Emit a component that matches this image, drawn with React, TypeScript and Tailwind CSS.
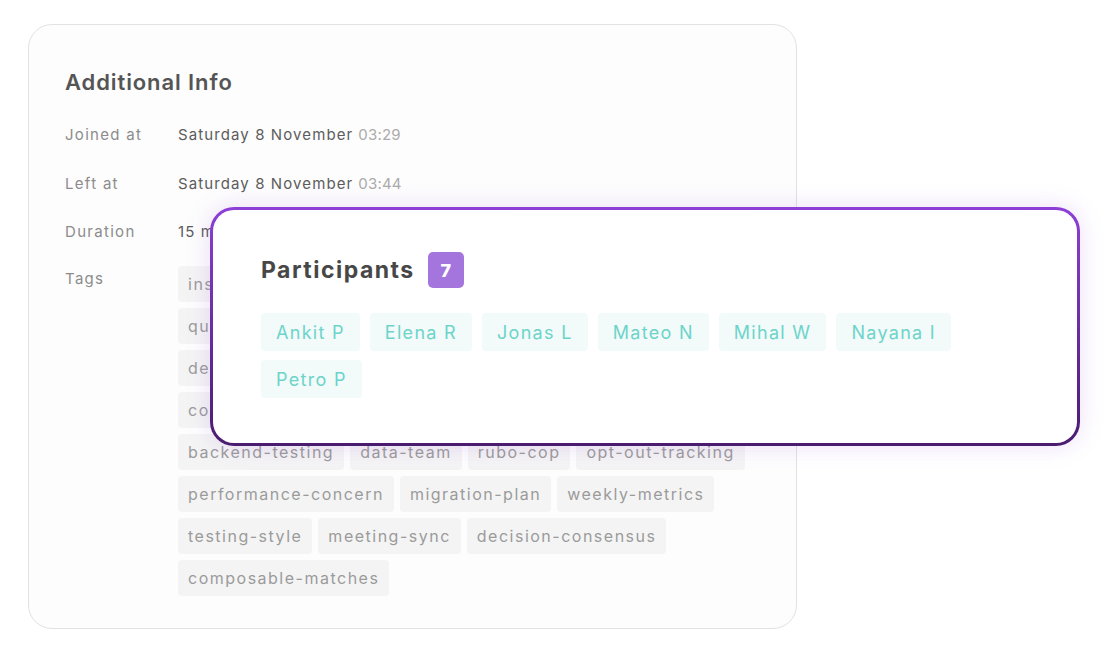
import React from "react"

const tagRows = [
  ["insights", "product-roadmap", "sprint-review"],
  ["quick-wins", "customer-feedback", "api-design"],
  ["design-review", "release-notes", "onboarding"],
  ["code-quality", "bug-triage", "retrospective"],
  ["backend-testing", "data-team", "rubo-cop", "opt-out-tracking"],
  ["performance-concern", "migration-plan", "weekly-metrics"],
  ["testing-style", "meeting-sync", "decision-consensus"],
  ["composable-matches"],
]

const participants = ["Ankit P", "Elena R", "Jonas L", "Mateo N", "Mihal W", "Nayana I", "Petro P"]

function InfoRow({ label, value, time }: { label: string; value: string; time?: string }) {
  return (
    <div className="flex items-center h-[48.5px]">
      <div className="w-[113px] shrink-0 text-[15px] text-[#8c8c8c] tracking-[1.3px]">{label}</div>
      <div className="text-[15px] text-[#5c5c5c] tracking-[1.1px]">
        {value}
        {time && <span className="ml-[5px] text-[#ababab] tracking-[0.2px]">{time}</span>}
      </div>
    </div>
  )
}

export default function App() {
  return (
    <div
      className="relative w-[1108px] h-[653px] bg-white"
      style={{ fontFamily: "Inter, 'Noto Sans', sans-serif" }}
    >
      <div className="absolute left-[28px] top-[24px] w-[769px] h-[605px] rounded-[24px] border border-[#e2e2e2] bg-[#fdfdfd] px-[36px] pt-[43px]">
        <h2 className="text-[22px] font-semibold text-[#555] tracking-[0.9px] leading-[28px]">Additional Info</h2>
        <div className="mt-[15px]">
          <InfoRow label="Joined at" value="Saturday 8 November" time="03:29" />
          <InfoRow label="Left at" value="Saturday 8 November" time="03:44" />
          <InfoRow label="Duration" value="15 minutes" />
          <div className="flex mt-[9px]">
            <div className="w-[113px] shrink-0 text-[15px] text-[#8c8c8c] tracking-[1.3px] pt-[2px]">Tags</div>
            <div className="flex flex-col gap-[6px]">
              {tagRows.map((row, i) => (
                <div key={i} className="flex gap-[6px]">
                  {row.map((t) => (
                    <span
                      key={t}
                      className="h-[36px] flex items-center px-[10px] rounded-[4px] bg-[#f4f4f4] text-[16px] text-[#9b9b9b] tracking-[1.5px]"
                    >
                      {t}
                    </span>
                  ))}
                </div>
              ))}
            </div>
          </div>
        </div>
      </div>

      {/* participants overlay card */}
      <div className="absolute left-[210px] top-[207px] w-[870px] h-[239px] rounded-[24px] p-[3px] bg-gradient-to-b from-[#8d3fd6] to-[#4a1c70] shadow-[0_0_24px_rgba(150,80,220,0.18)]">
        <div className="h-full w-full rounded-[21px] bg-white pl-[48px] pt-[42px]">
          <div className="flex items-center gap-[13px]">
            <h3 className="text-[23px] font-bold text-[#474747] tracking-[1.5px]">Participants</h3>
            <span className="w-[36px] h-[36px] rounded-[5px] bg-[#a475dc] text-white font-extrabold text-[18px] flex items-center justify-center">
              7
            </span>
          </div>
          <div className="mt-[25px] flex flex-wrap gap-x-[10px] gap-y-[9px] w-[720px]">
            {participants.map((p) => (
              <span
                key={p}
                className="h-[38px] flex items-center px-[15px] rounded-[4px] bg-[#f2fafa] text-[18px] text-[#6dd4c9] tracking-[1.3px]"
              >
                {p}
              </span>
            ))}
          </div>
        </div>
      </div>
    </div>
  )
}
